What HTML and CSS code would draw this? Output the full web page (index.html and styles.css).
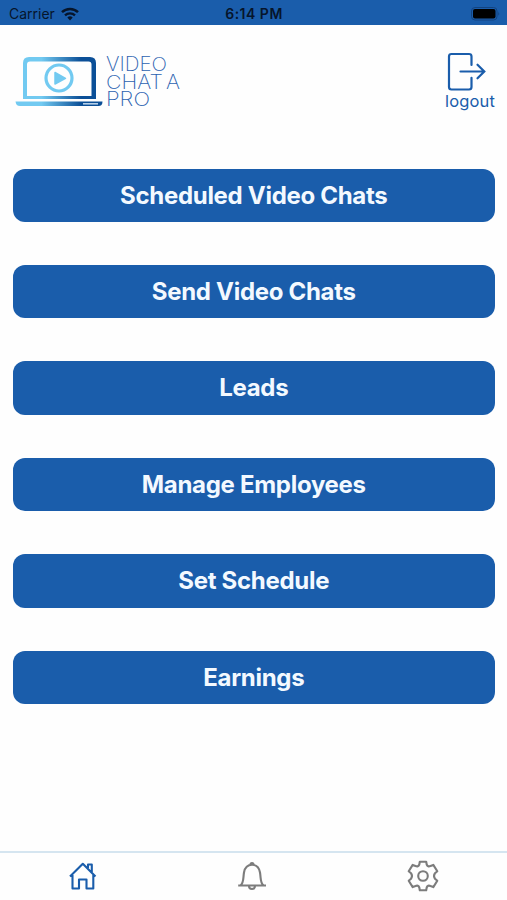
FILE: index.html
```html
<!DOCTYPE html>
<html lang="en">
<head>
    <meta charset="UTF-8">
    <meta name="viewport" content="width=device-width, initial-scale=1.0">
    <title>Video Chat A Pro</title>
    <link rel="stylesheet" href="styles.css">
</head>
<body>
    <div class="status">
        <div class="carrier">
            <span>Carrier</span>
            <svg class="wifi" viewBox="0 0 18 14" width="18" height="14">
                <path d="M1 5.2a11.5 11.5 0 0 1 16 0" fill="none" stroke="#06152b" stroke-width="2.5"/>
                <path d="M4 8.3a7.2 7.2 0 0 1 10 0" fill="none" stroke="#06152b" stroke-width="2.3"/>
                <path d="M6.3 10.6a4 4 0 0 1 5.4 0L9 13.4z" fill="#06152b"/>
            </svg>
        </div>
        <div class="time">6:14 PM</div>
        <div class="power">
            <svg viewBox="0 0 30 14" width="30" height="14">
                <rect x="0.5" y="0.5" width="25.5" height="12.5" rx="3.5" fill="none" stroke="#124380"/>
                <rect x="2" y="2" width="22.5" height="9.5" rx="2" fill="#000"/>
                <path d="M27.3 4.6q1.8 2.1 0 4.2z" fill="#124380"/>
            </svg>
        </div>
    </div>
    <div class="header">
        <svg class="logo" viewBox="0 0 170 56" width="170" height="56">
            <defs>
                <linearGradient id="fade" gradientUnits="userSpaceOnUse" x1="0" y1="0" x2="88" y2="0">
                    <stop offset="0.1" stop-color="#72caf1"/>
                    <stop offset="0.3" stop-color="#72caf1"/>
                    <stop offset="0.75" stop-color="#0b4f97"/>
                    <stop offset="1" stop-color="#0b4f97"/>
                </linearGradient>
            </defs>
            <path fill="url(#fade)" fill-rule="evenodd" d="M13 7H75q6 0 6 6V49H8V13q0-6 6-6zM15 11.5q-3 0-3 3V46H76.500V14.500q0-3-3-3z"/>
            <path fill="url(#fade)" d="M0.500 51.500H87.500q0 4.500-4 4.500H5q-4 0-4.500-4.500z"/>
            <rect x="68" y="53" width="15" height="1.600" fill="#b5cfe8"/>
            <circle cx="44" cy="28" r="13" fill="none" stroke="#72caf1" stroke-width="3.2"/>
            <path d="M40 22.500v11.500l10.500-5.700z" fill="#72caf1" stroke="#72caf1" stroke-width="1.500" stroke-linejoin="round"/>
            <g class="brand">
                <text x="91" y="21" textLength="61" lengthAdjust="spacingAndGlyphs">VIDEO</text>
                <text x="91" y="38.500" textLength="74" lengthAdjust="spacingAndGlyphs">CHAT A</text>
                <text x="91" y="56" textLength="44" lengthAdjust="spacingAndGlyphs">PRO</text>
            </g>
        </svg>
        <a href="#" class="logout">
            <svg viewBox="0 0 40 40" width="40" height="40">
                <path d="M24.500 13V4.500q0-2.500-2.500-2.500H4.500Q2 2 2 4.500V35q0 2.500 2.500 2.500H22q2.500 0 2.500-2.500V25.800"/>
                <path d="M13.500 19.500H37M30.500 12.700l6.800 6.800-6.800 6.800"/>
            </svg>
            <span>logout</span>
        </a>
    </div>
    <div class="menu">
        <a href="#" class="btn">Scheduled Video Chats</a>
        <a href="#" class="btn">Send Video Chats</a>
        <a href="#" class="btn">Leads</a>
        <a href="#" class="btn">Manage Employees</a>
        <a href="#" class="btn">Set Schedule</a>
        <a href="#" class="btn">Earnings</a>
    </div>
    <div class="tabs">
        <a href="#" class="tab active">
            <svg viewBox="0 0 30 30" width="30" height="30">
                <path d="M2 15.500L14.800 2.800L27.500 15.500M4.500 14V27.500H11V18.500H18.500V27.500H25.300V14M20 7V3.500H23.800V11"/>
            </svg>
        </a>
        <a href="#" class="tab">
            <svg viewBox="0 0 30 30" width="30" height="30">
                <path d="M1.200 24.500H29M3.500 24.300C7 22 6 17 7 11.500C8 6 11 3.800 15 3.800S22 6 23 11.500C24 17 23 22 26.500 24.300M13.500 3.500q0-1.500 1.500-1.500t1.500 1.500M12 25q0 3 3 3t3-3"/>
            </svg>
        </a>
        <a href="#" class="tab">
            <svg viewBox="0 0 32 32" width="32" height="32">
                <path d="M12.800 1.800H19.200L19.700 4.500Q20.800 7.200 23.500 6L26.300 4.900L30.300 11.200L28 13.200Q26 16 28 18.800L30.300 20.800L26.300 27.100L23.500 26Q20.800 24.800 19.700 27.500L19.200 30.200H12.800L12.300 27.500Q11.200 24.800 8.500 26L5.700 27.100L1.700 20.800L4 18.800Q6 16 4 13.200L1.700 11.200L5.700 4.900L8.500 6Q11.200 7.200 12.300 4.500z"/>
                <circle cx="16" cy="16" r="4.800"/>
            </svg>
        </a>
    </div>
</body>
</html>
```
FILE: styles.css
```css
body {
    margin: 0;
    height: 900px;
    display: flex;
    flex-direction: column;
    overflow: hidden;
    background-color: #fefefe;
    font-family: Inter, "Liberation Sans", sans-serif;
}
a {
    text-decoration: none;
}
.status {
    display: grid;
    grid-template-columns: 1fr auto 1fr;
    align-items: center;
    height: 25px;
    padding: 2px 6px 0 9px;
    box-sizing: border-box;
    background-color: #1a5dab;
    color: #06152b;
    font-size: 14px;
}
.carrier {
    display: flex;
    align-items: center;
    gap: 6px;
}
.time {
    margin-right: 2px;
    font-size: 14px;
    font-weight: 600;
    letter-spacing: 0.5px;
}
.power {
    display: flex;
    justify-content: flex-end;
}
.header {
    display: flex;
    justify-content: space-between;
    align-items: flex-start;
    height: 143.5px;
    padding: 25px 12px 0 15px;
    box-sizing: border-box;
}
.logo {
    overflow: visible;
}
.brand {
    fill: #2c62b0;
    font-size: 19.5px;
    font-weight: 200;
    word-spacing: -2.5px;
}
.logout {
    display: flex;
    flex-direction: column;
    color: #1a5dab;
    font-size: 16.5px;
    line-height: 20px;
}
.logout svg {
    margin: 2px 0 -1px 1.5px;
    fill: none;
    stroke: #1a5dab;
    stroke-width: 2.2;
    stroke-linecap: round;
}
.logout span {
    letter-spacing: 0.15px;
}
.menu {
    display: flex;
    flex-direction: column;
    gap: 43.2px;
    flex: 1;
    padding: 0 12.5px 0 13px;
}
.btn {
    height: 53.3px;
    line-height: 54px;
    border-radius: 12px;
    background-color: #1a5dab;
    color: #f3f9ff;
    font-size: 24px;
    font-weight: 650;
    letter-spacing: -0.3px;
    text-align: center;
}
.tabs {
    display: grid;
    grid-template-columns: 165px 174px 168px;
    height: 49px;
    padding-bottom: 2px;
    box-sizing: border-box;
    border-top: 2px solid #d5e5f0;
}
.tab {
    display: flex;
    justify-content: center;
    align-items: center;
}
.tab svg {
    fill: none;
    stroke: #7c7c7c;
    stroke-width: 2.1;
    stroke-linejoin: round;
}
.tab.active svg {
    stroke: #1a5dab;
}
```
